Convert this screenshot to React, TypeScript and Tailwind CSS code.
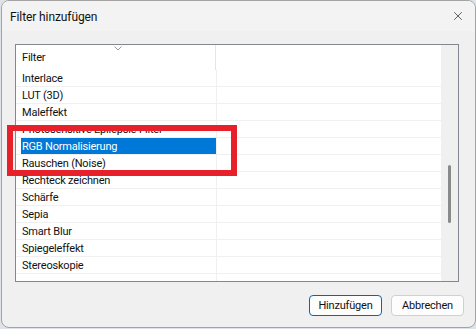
import { X } from 'lucide-react';

const rows = [
  'Interlace',
  'LUT (3D)',
  'Maleffekt',
  'Photosensitive Epilepsie-Filter',
  'RGB Normalisierung',
  'Rauschen (Noise)',
  'Rechteck zeichnen',
  'Schärfe',
  'Sepia',
  'Smart Blur',
  'Spiegeleffekt',
  'Stereoskopie',
  '',
];

export default function App() {
  return (
    <div className="w-[476px] h-[329px] bg-[#dfe3e8] overflow-hidden" style={{ fontFamily: 'Roboto, "Noto Sans", sans-serif' }}>
      <div className="relative ml-[1px] w-[475px] h-[328px] rounded-[8px] border border-[#a3a3a3] bg-[#f0f0f0] flex flex-col overflow-hidden text-[11px] tracking-[-0.2px] text-[#111]">
        {/* Title bar */}
        <div className="h-[30px] shrink-0 bg-[#f3f3f3] flex items-center justify-between pl-[8px] pr-[10px]">
          <span className="text-[12px] tracking-[-0.1px] leading-none mt-[1px]">Filter hinzufügen</span>
          <X className="w-[14px] h-[14px] text-[#222]" strokeWidth={1.2} />
        </div>

        {/* List view */}
        <div className="mt-[13px] ml-[13px] w-[444px] h-[238px] border border-[#828790] bg-white flex overflow-hidden">
          <div className="flex-1 flex flex-col">
            <div className="h-[25px] shrink-0 flex relative">
              <div className="w-[200px] border-r border-[#e5e5e5] h-[25px] pl-[6px] pt-[7px] leading-[12px]">
                Filter
              </div>
              <svg className="absolute left-[98px] top-[1px]" width="8" height="5" viewBox="0 0 8 5">
                <path d="M0.5 0.5 L4 4 L7.5 0.5" fill="none" stroke="#9a9a9a" strokeWidth="1" />
              </svg>
            </div>
            {rows.map((r) => {
              const sel = r === 'RGB Normalisierung';
              return (
                <div key={r || 'empty'} className="h-[17px] shrink-0 flex border-b border-[#f0f0f0]">
                  <div className="w-[201px] shrink-0 pl-[5px] border-r border-[#f0f0f0] flex">
                    <div className={`w-[196px] h-[16px] pl-[1px] pt-[3px] leading-[12px] whitespace-nowrap overflow-hidden ${sel ? 'bg-[#0078d7] text-white' : ''}`}>
                      {r}
                    </div>
                  </div>
                  <div className="flex-1" />
                </div>
              );
            })}
          </div>
          {/* Scrollbar */}
          <div className="w-[17px] shrink-0 bg-[#f0f0f0] flex flex-col">
            <div className="mt-[120px] ml-[7px] w-[3px] h-[58px] rounded-full bg-[#8a8a8a]" />
          </div>
        </div>

        {/* Buttons */}
        <div className="mt-[13px] flex justify-end gap-[9px] pr-[11px]">
          <button className="w-[73px] h-[21px] rounded-[4px] border border-[#0067c0] bg-[#fdfdfd] leading-none">Hinzufügen</button>
          <button className="w-[73px] h-[21px] rounded-[4px] border border-[#d0d0d0] bg-[#fdfdfd] leading-none">Abbrechen</button>
        </div>

        {/* Red highlight marker */}
        <div className="absolute left-[5px] top-[124px] w-[230px] h-[51px] border-[6px] border-[#e8202a]" />
      </div>
    </div>
  );
}
